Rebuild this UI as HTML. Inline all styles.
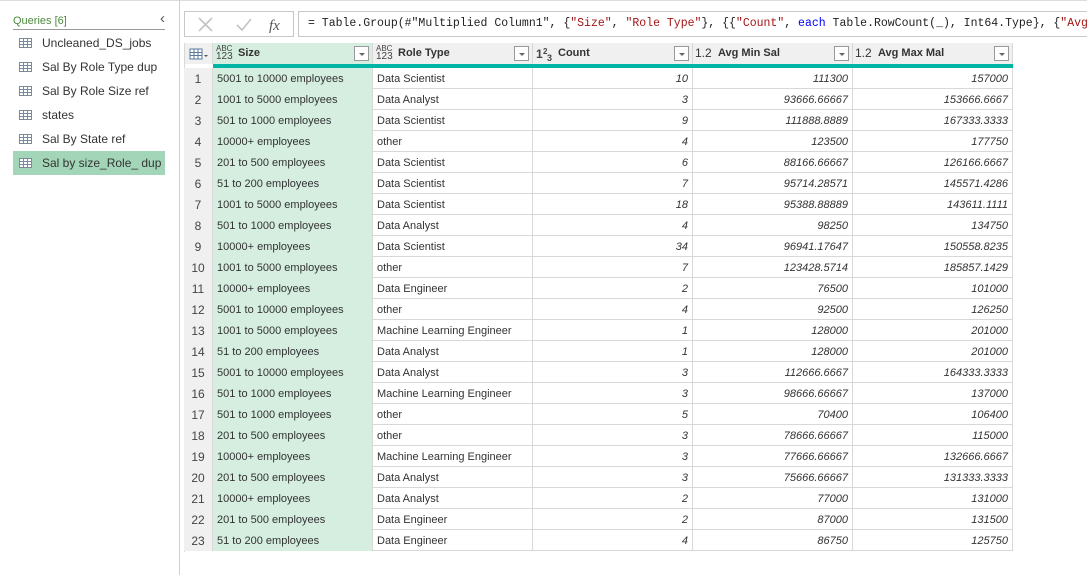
<!DOCTYPE html>
<html><head><meta charset="utf-8"><style>
*{margin:0;padding:0;box-sizing:border-box}
body{width:1087px;height:575px;background:#fff;font-family:"Liberation Sans",sans-serif;font-size:11px;color:#333;position:relative;overflow:hidden}
.topline{position:absolute;left:0;top:0;width:1087px;height:1px;background:#ddd}
.vdiv{position:absolute;left:179px;top:0;width:1px;height:575px;background:#d0d0d0}
.qh{position:absolute;left:13px;top:15px;width:152px;color:#4b8a3d;font-size:11px;border-bottom:1px solid #999;padding-bottom:2px}
.chev{position:absolute;left:160px;top:10px;font-size:15px;color:#555}
.q{position:absolute;left:13px;width:152px;height:24px;line-height:24px;padding-left:29px;font-size:12px;color:#333}
.q.sel{background:#a3d6b8}
.ti{position:absolute;left:6px;top:7px;width:13px;height:10px;border:1px solid #7a8a9a;background:
linear-gradient(#7a8a9a,#7a8a9a) 0 2px/100% 1px no-repeat,
linear-gradient(#7a8a9a,#7a8a9a) 0 5px/100% 1px no-repeat,
linear-gradient(#7a8a9a,#7a8a9a) 3px 0/1px 100% no-repeat,
linear-gradient(#7a8a9a,#7a8a9a) 7px 0/1px 100% no-repeat,#fff}
.fb1{position:absolute;left:184px;top:11px;width:110px;height:26px;border:1px solid #c8c8c8}
.fb2{position:absolute;left:298px;top:11px;width:789px;height:26px;border:1px solid #c8c8c8;border-right:none;overflow:hidden;font-family:"Liberation Mono",monospace;font-size:11.5px;line-height:24px;padding-left:9px;white-space:nowrap;color:#222}
.s{color:#a31515}.k{color:#0000ff}
.hd{position:absolute;top:43px;height:21px;background:#f0f0f0;border-right:1px solid #d8d8d8;font-weight:bold;font-size:11px;line-height:21px;color:#333}
.teal{position:absolute;left:213px;top:64px;width:800px;height:4px;background:#00b5a5}
.dd{position:absolute;right:3px;top:3px;width:15px;height:15px;border:1px solid #999;background:#fff}
.dd:after{content:"";position:absolute;left:4px;top:6px;border-left:3px solid transparent;border-right:3px solid transparent;border-top:3px solid #666}
.ty{position:absolute;top:2px;font-size:8px;line-height:8px;font-weight:normal;color:#444}
.row{position:absolute;left:184px;width:829px;height:21px;border-bottom:1px solid #d8d8d8}
.c{position:absolute;top:0;height:21px;line-height:23px;border-right:1px solid #d8d8d8;white-space:nowrap;overflow:hidden}
.n{left:0;width:29px;background:#f0f0f0;text-align:center;font-size:12px;color:#444}
.a{left:29px;width:160px;background:#d5eee0;padding-left:4px}
.b{left:189px;width:160px;padding-left:4px}
.d{left:349px;width:160px;text-align:right;padding-right:4px;font-style:italic}
.e{left:509px;width:160px;text-align:right;padding-right:4px;font-style:italic}
.f{left:669px;width:160px;text-align:right;padding-right:4px;font-style:italic}
.leftb{position:absolute;left:184px;top:43px;width:1px;height:509px;background:#d8d8d8}
</style></head><body>
<div class="topline"></div>
<div class="vdiv"></div>
<div class="qh">Queries [6]</div>
<div class="chev">&#8249;</div>
<div class="q" style="top:31px"><span class="ti"></span>Uncleaned_DS_jobs</div>
<div class="q" style="top:55px"><span class="ti"></span>Sal By Role Type dup</div>
<div class="q" style="top:79px"><span class="ti"></span>Sal By Role Size ref</div>
<div class="q" style="top:103px"><span class="ti"></span>states</div>
<div class="q" style="top:127px"><span class="ti"></span>Sal By State ref</div>
<div class="q sel" style="top:151px"><span class="ti"></span>Sal by size_Role_ dup</div>

<div class="fb1">
<svg width="110" height="26" style="position:absolute;left:0;top:0">
<path d="M14 6 L27 19 M27 6 L14 19" stroke="#c4c4c4" stroke-width="1.6"/>
<path d="M52 13 L57 18 L66 7" stroke="#c4c4c4" stroke-width="1.6" fill="none"/>
<text x="84" y="18" font-family="Liberation Serif,serif" font-style="italic" font-size="15" fill="#555">fx</text>
</svg></div>
<div class="fb2">= Table.Group(#"Multiplied Column1", {<span class="s">"Size"</span>, <span class="s">"Role Type"</span>}, {{<span class="s">"Count"</span>, <span class="k">each</span> Table.RowCount(_), Int64.Type}, {<span class="s">"Avg Min Sal"</span></div>

<div class="hd" style="left:184px;width:29px"><svg width="29" height="21"><rect x="6" y="6" width="12" height="10" fill="#fff" stroke="#5a7a9a"/><path d="M6 9.5H18M6 12.5H18M10 6V16M14 6V16" stroke="#5a7a9a"/><path d="M20 12l2 2 2-2z" fill="#555"/></svg></div>
<div class="hd" style="left:213px;width:160px;background:#d5eee0;padding-left:25px"><span class="ty" style="left:3px">ABC<br><span style="font-size:10px">123</span></span>Size<span class="dd"></span></div>
<div class="hd" style="left:373px;width:160px;padding-left:25px"><span class="ty" style="left:3px">ABC<br><span style="font-size:10px">123</span></span>Role Type<span class="dd"></span></div>
<div class="hd" style="left:533px;width:160px;padding-left:25px"><svg width="22" height="21" style="position:absolute;left:1px;top:0"><text x="2" y="15" font-size="12" fill="#444" font-family="Liberation Sans">1</text><text x="9" y="11" font-size="8" fill="#444" font-family="Liberation Sans">2</text><text x="13" y="18" font-size="9" fill="#444" font-family="Liberation Sans">3</text></svg>Count<span class="dd"></span></div>
<div class="hd" style="left:693px;width:160px;padding-left:25px"><span style="position:absolute;left:2px;font-weight:normal;font-size:12px">1.2</span>Avg Min Sal<span class="dd"></span></div>
<div class="hd" style="left:853px;width:160px;padding-left:25px"><span style="position:absolute;left:2px;font-weight:normal;font-size:12px">1.2</span>Avg Max Mal<span class="dd"></span></div>
<div class="teal"></div>
<div class="leftb"></div>

<div class="row" style="top:68px"><div class="c n">1</div><div class="c a">5001 to 10000 employees</div><div class="c b">Data Scientist</div><div class="c d">10</div><div class="c e">111300</div><div class="c f">157000</div></div>
<div class="row" style="top:89px"><div class="c n">2</div><div class="c a">1001 to 5000 employees</div><div class="c b">Data Analyst</div><div class="c d">3</div><div class="c e">93666.66667</div><div class="c f">153666.6667</div></div>
<div class="row" style="top:110px"><div class="c n">3</div><div class="c a">501 to 1000 employees</div><div class="c b">Data Scientist</div><div class="c d">9</div><div class="c e">111888.8889</div><div class="c f">167333.3333</div></div>
<div class="row" style="top:131px"><div class="c n">4</div><div class="c a">10000+ employees</div><div class="c b">other</div><div class="c d">4</div><div class="c e">123500</div><div class="c f">177750</div></div>
<div class="row" style="top:152px"><div class="c n">5</div><div class="c a">201 to 500 employees</div><div class="c b">Data Scientist</div><div class="c d">6</div><div class="c e">88166.66667</div><div class="c f">126166.6667</div></div>
<div class="row" style="top:173px"><div class="c n">6</div><div class="c a">51 to 200 employees</div><div class="c b">Data Scientist</div><div class="c d">7</div><div class="c e">95714.28571</div><div class="c f">145571.4286</div></div>
<div class="row" style="top:194px"><div class="c n">7</div><div class="c a">1001 to 5000 employees</div><div class="c b">Data Scientist</div><div class="c d">18</div><div class="c e">95388.88889</div><div class="c f">143611.1111</div></div>
<div class="row" style="top:215px"><div class="c n">8</div><div class="c a">501 to 1000 employees</div><div class="c b">Data Analyst</div><div class="c d">4</div><div class="c e">98250</div><div class="c f">134750</div></div>
<div class="row" style="top:236px"><div class="c n">9</div><div class="c a">10000+ employees</div><div class="c b">Data Scientist</div><div class="c d">34</div><div class="c e">96941.17647</div><div class="c f">150558.8235</div></div>
<div class="row" style="top:257px"><div class="c n">10</div><div class="c a">1001 to 5000 employees</div><div class="c b">other</div><div class="c d">7</div><div class="c e">123428.5714</div><div class="c f">185857.1429</div></div>
<div class="row" style="top:278px"><div class="c n">11</div><div class="c a">10000+ employees</div><div class="c b">Data Engineer</div><div class="c d">2</div><div class="c e">76500</div><div class="c f">101000</div></div>
<div class="row" style="top:299px"><div class="c n">12</div><div class="c a">5001 to 10000 employees</div><div class="c b">other</div><div class="c d">4</div><div class="c e">92500</div><div class="c f">126250</div></div>
<div class="row" style="top:320px"><div class="c n">13</div><div class="c a">1001 to 5000 employees</div><div class="c b">Machine Learning Engineer</div><div class="c d">1</div><div class="c e">128000</div><div class="c f">201000</div></div>
<div class="row" style="top:341px"><div class="c n">14</div><div class="c a">51 to 200 employees</div><div class="c b">Data Analyst</div><div class="c d">1</div><div class="c e">128000</div><div class="c f">201000</div></div>
<div class="row" style="top:362px"><div class="c n">15</div><div class="c a">5001 to 10000 employees</div><div class="c b">Data Analyst</div><div class="c d">3</div><div class="c e">112666.6667</div><div class="c f">164333.3333</div></div>
<div class="row" style="top:383px"><div class="c n">16</div><div class="c a">501 to 1000 employees</div><div class="c b">Machine Learning Engineer</div><div class="c d">3</div><div class="c e">98666.66667</div><div class="c f">137000</div></div>
<div class="row" style="top:404px"><div class="c n">17</div><div class="c a">501 to 1000 employees</div><div class="c b">other</div><div class="c d">5</div><div class="c e">70400</div><div class="c f">106400</div></div>
<div class="row" style="top:425px"><div class="c n">18</div><div class="c a">201 to 500 employees</div><div class="c b">other</div><div class="c d">3</div><div class="c e">78666.66667</div><div class="c f">115000</div></div>
<div class="row" style="top:446px"><div class="c n">19</div><div class="c a">10000+ employees</div><div class="c b">Machine Learning Engineer</div><div class="c d">3</div><div class="c e">77666.66667</div><div class="c f">132666.6667</div></div>
<div class="row" style="top:467px"><div class="c n">20</div><div class="c a">201 to 500 employees</div><div class="c b">Data Analyst</div><div class="c d">3</div><div class="c e">75666.66667</div><div class="c f">131333.3333</div></div>
<div class="row" style="top:488px"><div class="c n">21</div><div class="c a">10000+ employees</div><div class="c b">Data Analyst</div><div class="c d">2</div><div class="c e">77000</div><div class="c f">131000</div></div>
<div class="row" style="top:509px"><div class="c n">22</div><div class="c a">201 to 500 employees</div><div class="c b">Data Engineer</div><div class="c d">2</div><div class="c e">87000</div><div class="c f">131500</div></div>
<div class="row" style="top:530px"><div class="c n">23</div><div class="c a">51 to 200 employees</div><div class="c b">Data Engineer</div><div class="c d">4</div><div class="c e">86750</div><div class="c f">125750</div></div>
</body></html>
